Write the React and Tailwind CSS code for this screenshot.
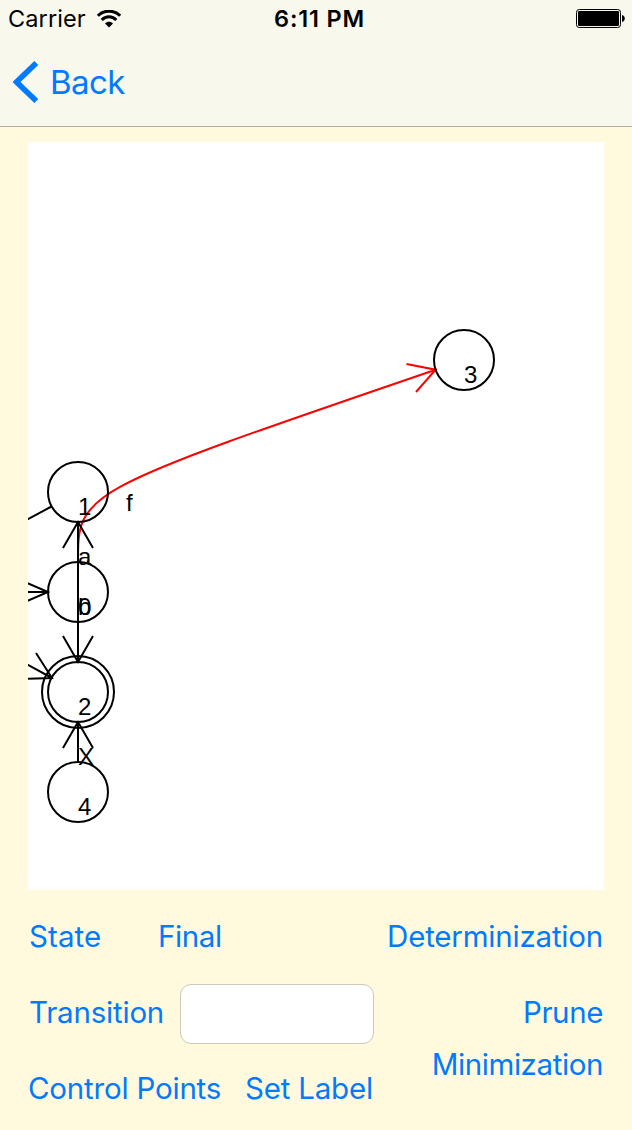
const states = [
  { id: '1', x: 78, y: 492 },
  { id: '0', x: 78, y: 592 },
  { id: '2', x: 78, y: 692, final: true },
  { id: '4', x: 78, y: 792 },
  { id: '3', x: 464, y: 360 },
];

const labels = [
  { text: 'a', x: 78, y: 565 },
  { text: 'b', x: 78, y: 615 },
  { text: 'X', x: 78, y: 765 },
  { text: 'f', x: 126, y: 511 },
];

function Wifi() {
  return (
    <svg className="ml-[11px] h-[18px] w-6" viewBox="0 0 24 18" fill="none" stroke="#000" strokeWidth="3">
      <path d="M0.9 5.8C7 -0.4 17 -0.4 23.1 5.8" />
      <path d="M4.7 10C8.8 5.8 15.2 5.8 19.3 10" />
      <path d="M12 17.4L8 13.4C10.2 11.2 13.8 11.2 16 13.4Z" fill="#000" stroke="none" />
    </svg>
  );
}

function Battery() {
  return (
    <svg className="h-[19px] w-[49px]" viewBox="0 0 49 19">
      <rect x="0.5" y="0.5" width="44" height="18" rx="2.8" fill="none" stroke="#000" />
      <rect x="2" y="2" width="41" height="15" rx="1.3" fill="#000" />
      <path d="M46 6C49.7 6.5 49.7 12.5 46 13Z" fill="#000" />
    </svg>
  );
}

function Canvas() {
  return (
    <svg
      className="mx-7 mt-[15px] h-[748px] w-[576px] shrink-0 bg-white font-['Liberation_Sans',sans-serif] text-2xl"
      viewBox="28 142 576 748"
      fill="none"
      stroke="#000"
      strokeWidth="2"
    >
      <path
        stroke="#f00"
        d="M78 562C78 492 78 492 435.6 369.7M406.5 364L435.6 369.7L416 392"
      />
      {states.map((s) => (
        <g key={s.id}>
          <circle cx={s.x} cy={s.y} r="30" />
          {s.final && <circle cx={s.x} cy={s.y} r="36" />}
          <text x={s.x} y={s.y + 23} fill="#000" stroke="none">{s.id}</text>
        </g>
      ))}
      <path d="M78 522V662M63 548L78 522L93 548M63 636L78 662L93 636" />
      <path d="M78 762V722M63 748L78 722L93 748" />
      <path d="M51.5 506.5L20 523.5" />
      <path d="M20 592H48M20 580L48 592L20 604" />
      <path d="M20 660.5L52 678M36 653L52 678L22 679" />
      {labels.map((l) => (
        <text key={l.text} x={l.x} y={l.y} fill="#000" stroke="none">{l.text}</text>
      ))}
    </svg>
  );
}

export default function App() {
  return (
    <div className="flex h-[1130px] w-[632px] flex-col overflow-hidden bg-[#fff9de] font-['Inter',sans-serif] text-[#007aff]">
      <header className="h-[127px] shrink-0 border-b border-[#b2afa0] bg-[#f8f8ec]">
        <div className="grid h-[37px] grid-cols-3 items-center pl-2 pr-[7px] text-black">
          <div className="flex items-center">
            <span className="text-[23.5px] tracking-[0.1px]">Carrier</span>
            <Wifi />
          </div>
          <span className="pl-[6px] text-center text-[23.5px] font-semibold tracking-[0.8px]">6:11 PM</span>
          <div className="flex justify-end"><Battery /></div>
        </div>
        <button className="flex h-[90px] items-center pl-[13px]">
          <svg className="h-[42px] w-[26px]" viewBox="0 0 26 42" fill="none" stroke="currentColor" strokeWidth="5.6">
            <path d="M23.3 2L3.5 21L23.3 40" />
          </svg>
          <span className="ml-[11px] pt-px text-[33px] tracking-[-0.6px]">Back</span>
        </button>
      </header>
      <Canvas />
      <footer className="flex justify-between px-7 pt-4 text-[29.5px] leading-[60px] tracking-[-0.2px]">
        <div className="flex flex-col gap-4">
          <div className="flex">
            <button className="w-[130px] pl-px text-left tracking-[0.1px]">State</button>
            <button className="tracking-[-0.4px]">Final</button>
          </div>
          <div className="flex h-[60px] items-center">
            <button className="w-[152px] pl-px text-left">Transition</button>
            <input aria-label="Label" className="mt-1 h-[60px] w-[194px] rounded-[11px] border border-[#cdc9b9] bg-white px-3 text-black" />
          </div>
          <div className="flex">
            <button className="w-[217px] text-left">Control Points</button>
            <button>Set Label</button>
          </div>
        </div>
        <div className="flex flex-col items-end pr-px pt-1 leading-[52px]">
          <button className="mb-6 tracking-[-0.2px]">Determinization</button>
          <button className="tracking-[-0.4px]">Prune</button>
          <button className="tracking-[-0.4px]">Minimization</button>
        </div>
      </footer>
    </div>
  );
}
